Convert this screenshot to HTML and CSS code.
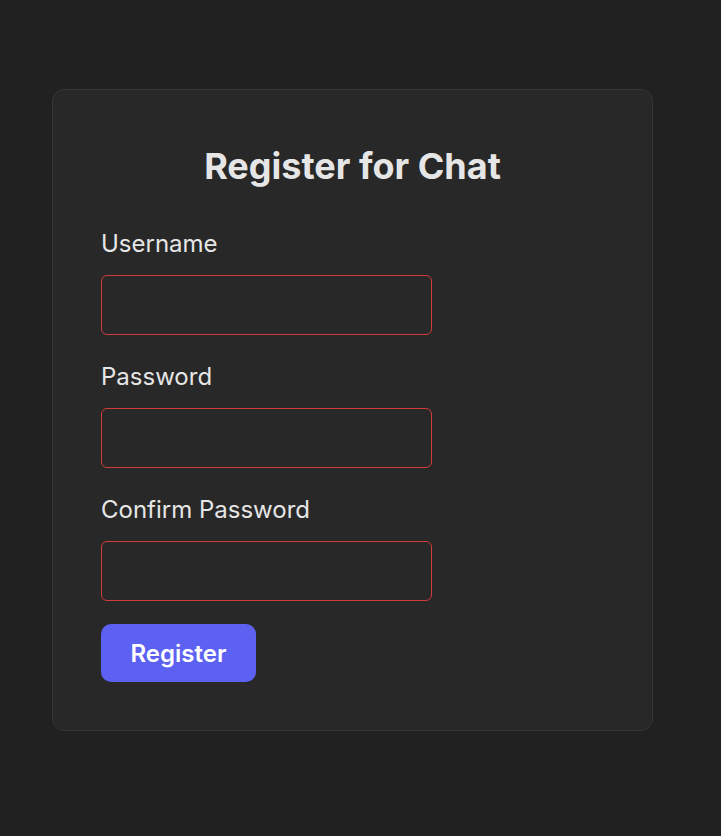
FILE: index.html
```html
<!DOCTYPE html>
<html lang="en">
<head>
<meta charset="utf-8">
<title>Register for Chat</title>
<link rel="stylesheet" href="styles.css">
</head>
<body>
<main class="page">
  <form class="card">
    <h1 class="title">Register for Chat</h1>
    <div class="field">
      <label class="label" for="username">Username</label>
      <input class="input" id="username" type="text">
    </div>
    <div class="field">
      <label class="label" for="password">Password</label>
      <input class="input" id="password" type="password">
    </div>
    <div class="field">
      <label class="label" for="confirm">Confirm Password</label>
      <input class="input" id="confirm" type="password">
    </div>
    <button class="button" type="button">Register</button>
  </form>
</main>
</body>
</html>
```

FILE: styles.css
```css
html, body {
  margin: 0;
  padding: 0;
  background: #212121;
}
body {
  font-family: Inter, "Noto Sans", sans-serif;
  color: #e6e6e6;
}
.page {
  padding: 89px 0 0 52px;
}
.card {
  box-sizing: border-box;
  width: 601px;
  height: 642px;
  background: #282828;
  border: 1px solid #353535;
  border-radius: 12px;
  padding: 48px 48px;
  display: flex;
  flex-direction: column;
  align-items: flex-start;
}
.title {
  align-self: stretch;
  text-align: center;
  margin: 6px 0 37px;
  font-size: 36px;
  line-height: 44px;
  font-weight: 700;
  color: #e6e6e6;
}
.field {
  display: flex;
  flex-direction: column;
  align-items: flex-start;
  margin-bottom: 23px;
}
.label {
  font-size: 24px;
  line-height: 38px;
  color: #e6e6e6;
  margin-bottom: 12px;
}
.input {
  box-sizing: border-box;
  width: 331px;
  height: 60px;
  background: #282828;
  border: 1px solid #d23b3b;
  border-radius: 6px;
  padding: 0 12px;
  color: #e6e6e6;
  font: inherit;
  outline: none;
}
.button {
  height: 60px;
  width: 155px;
  border: none;
  border-radius: 10px;
  background: #5c61f2;
  color: #ffffff;
  font-family: Inter, "Noto Sans", sans-serif;
  font-size: 24px;
  font-weight: 600;
  cursor: pointer;
}
```
